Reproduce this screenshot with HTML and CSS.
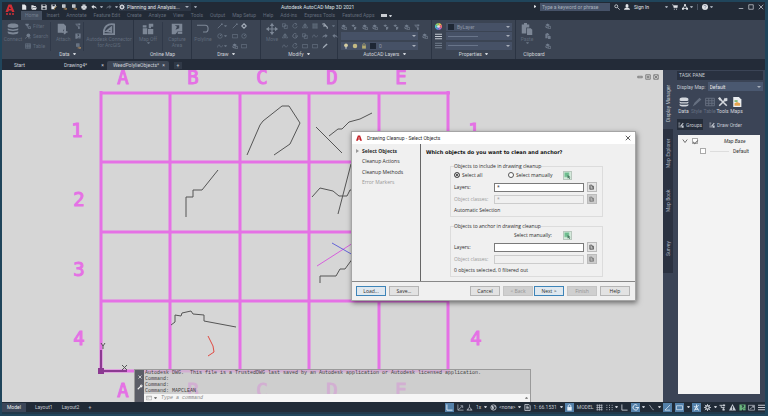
FILE: index.html
```html
<!DOCTYPE html>
<html lang="en">
<head>
<meta charset="utf-8">
<title>Autodesk AutoCAD Map 3D 2021</title>
<link rel="stylesheet" href="styles.css">
</head>
<body>
<svg class="sprite" aria-hidden="true">
  <symbol id="new" viewBox="0 0 16 16"><path d="M3 1h7l4 4v10H3z" fill="currentColor"/></symbol>
  <symbol id="open" viewBox="0 0 16 16"><path d="M1 14V3h5l2 2h5v3H5l-3 6zM5 9h11l-3 6H2z" fill="currentColor"/></symbol>
  <symbol id="save" viewBox="0 0 16 16"><path fill-rule="evenodd" d="M1 1h12l2 2v12H1zM4 2v4h8V2zM4 9v5h8V9z" fill="currentColor"/></symbol>
  <symbol id="saveas" viewBox="0 0 16 16"><path fill-rule="evenodd" d="M1 1h12v5L8 12v2H1zM4 2v4h6V2z" fill="currentColor"/><path d="M9 15l1-4 5-5" stroke="#d9b36a" stroke-width="2"/></symbol>
  <symbol id="doc" viewBox="0 0 16 16"><path d="M3 1h9v9H3z" fill="currentColor"/><path d="M6 4h4M6 7h4" stroke="#4a5568"/><path d="M7 13h8M12 10l3 3-3 3" stroke="#c89a62" stroke-width="2" fill="none"/></symbol>
  <symbol id="sheet" viewBox="0 0 16 16"><path d="M2 1h9l3 3v11H2zM5 5h5M5 8h6M5 11h6" fill="none" stroke="currentColor" stroke-width="2"/></symbol>
  <symbol id="print" viewBox="0 0 16 16"><path d="M4 1h8v4h3v7h-3v3H4v-3H1V5h3z" fill="currentColor"/><path d="M4 5h8M5 10h6" stroke="#4a5568"/></symbol>
  <symbol id="undo" viewBox="0 0 16 16"><path d="M7 2v3c5 0 8 3 8 8-2-3-4-4-8-4v4L1 7z" fill="currentColor"/></symbol>
  <symbol id="redo" viewBox="0 0 16 16"><path d="M9 2v3c-5 0-8 3-8 8 2-3 4-4 8-4v4l6-6z" fill="currentColor"/></symbol>
  <symbol id="gear" viewBox="0 0 16 16"><circle cx="8" cy="8" r="4" fill="none" stroke="currentColor" stroke-width="3"/><path d="M8 0v4M8 12v4M0 8h4M12 8h4M2 2l3 3M11 11l3 3M14 2l-3 3M2 14l3-3" stroke="currentColor" stroke-width="2"/></symbol>
  <symbol id="search" viewBox="0 0 16 16"><circle cx="6" cy="6" r="4" fill="none" stroke="currentColor" stroke-width="2"/><path d="M9 9l6 6" stroke="currentColor" stroke-width="2"/></symbol>
  <symbol id="user" viewBox="0 0 16 16"><ellipse cx="8" cy="5" rx="4" ry="5" fill="currentColor"/><path d="M0 15c0-4 4-5 8-5s8 1 8 5z" fill="currentColor"/></symbol>
  <symbol id="cart" viewBox="0 0 16 16"><path d="M0 2h3l2 8h9l1-6H4" fill="currentColor" stroke="currentColor"/><path d="M5 14h2M11 14h2" stroke="currentColor" stroke-width="3"/></symbol>
  <symbol id="apps" viewBox="0 0 16 16"><path d="M8 2L3 12h10z" fill="none" stroke="currentColor" stroke-width="2"/><path d="M6 0h4v5H6zM0 10h5v5H0zM11 10h5v5h-5z" fill="currentColor"/></symbol>
  <symbol id="help" viewBox="0 0 16 16"><circle cx="8" cy="8" r="8" fill="currentColor"/><path d="M5 6c0-4 6-3 6 0 0 2-3 2-3 4M8 12v2" stroke="#667085" stroke-width="2" fill="none"/></symbol>
  <symbol id="db" viewBox="0 0 16 16"><path d="M1 3c0-3 14-3 14 0v2c0 2-14 2-14 0zM1 7c2 2 12 2 14 0v2c0 2-14 2-14 0zM1 11c2 2 12 2 14 0v2c0 3-14 3-14 0z" fill="currentColor"/></symbol>
  <symbol id="filter" viewBox="0 0 16 16"><path d="M1 2h9v3L7 8v4H5V8L1 5z" fill="currentColor"/><path d="M9 10h6v5H9z" fill="none" stroke="currentColor" stroke-width="2"/></symbol>
  <symbol id="find" viewBox="0 0 16 16"><circle cx="9" cy="6" r="5" fill="currentColor"/><path d="M5 10l-4 5M8 13h7" stroke="currentColor" stroke-width="2"/></symbol>
  <symbol id="table" viewBox="0 0 16 16"><path d="M1 2h14v12H1zM1 6h14M1 10h14M6 2v12M11 2v12" fill="none" stroke="currentColor" stroke-width="1.5"/></symbol>
  <symbol id="attach" viewBox="0 0 16 16"><path d="M1 1h8l3 3v5H8v4H1z" fill="currentColor"/><path d="M10 15V9m-3 3h7m-3-5v7" stroke="currentColor" stroke-width="2"/></symbol>
  <symbol id="branch" viewBox="0 0 16 16"><path d="M1 3h9M5 3v5h8M10 8v6" stroke="currentColor" stroke-width="2" fill="none"/><path d="M9 1h5v4H9zM8 11h5v4H8z" fill="currentColor"/></symbol>
  <symbol id="arc" viewBox="0 0 16 16"><path d="M1 15C0 5 7 0 15 2v13zM5 11l6-5v6z" fill="none" stroke="currentColor" stroke-width="2.5"/></symbol>
  <symbol id="map" viewBox="0 0 16 16"><path fill-rule="evenodd" d="M1 1h14v10H9l-3 4H1zM5 3l3 2-2 4 5-2V3z" fill="currentColor"/><path d="M9 13h6" stroke="currentColor" stroke-width="3"/></symbol>
  <symbol id="mapoff" viewBox="0 0 16 16"><path d="M1 3h5v3H1zM1 7h6v8H1zM8 8h7v7H8zM9 1h6v4h-3v2H9z" fill="currentColor"/></symbol>
  <symbol id="polyline" viewBox="0 0 16 16"><path d="M0 3h11c5 0 5 9 0 9H8" fill="none" stroke="currentColor" stroke-width="1.5"/></symbol>
  <symbol id="line" viewBox="0 0 16 16"><path d="M2 14L13 3" stroke="currentColor" stroke-width="2"/><path d="M11 1h4v4h-4z" fill="currentColor"/></symbol>
  <symbol id="circle" viewBox="0 0 16 16"><circle cx="8" cy="8" r="6" fill="none" stroke="currentColor" stroke-width="1.5"/><path d="M8 8l4-4" stroke="currentColor" stroke-width="2"/></symbol>
  <symbol id="rect" viewBox="0 0 16 16"><path d="M1 4h14v9H1z" fill="none" stroke="currentColor" stroke-width="1.5"/></symbol>
  <symbol id="diamond" viewBox="0 0 16 16"><path d="M8 2l6 6-6 6-6-6z" fill="none" stroke="currentColor" stroke-width="3"/></symbol>
  <symbol id="wave" viewBox="0 0 16 16"><path d="M1 12c3-9 5-9 7-4s4 4 7-2" fill="none" stroke="currentColor" stroke-width="1.5"/></symbol>
  <symbol id="iso" viewBox="0 0 16 16"><path d="M3 2l8 11M11 13h2" fill="none" stroke="currentColor" stroke-width="1.5"/></symbol>
  <symbol id="move" viewBox="0 0 16 16"><path d="M8 1v14M1 8h14" stroke="currentColor" stroke-width="1.5"/><path d="M8 0l3 4H5zM8 16l3-4H5zM0 8l4-3v6zM16 8l-4-3v6z" fill="currentColor"/></symbol>
  <symbol id="copy" viewBox="0 0 16 16"><path d="M1 2h8v8H1zM6 6h8v9H6z" fill="none" stroke="currentColor" stroke-width="1.5"/></symbol>
  <symbol id="rotate" viewBox="0 0 16 16"><path d="M12 3a6 6 0 1 0 2 6M8 1l5 2-3 4" fill="none" stroke="currentColor" stroke-width="1.5"/></symbol>
  <symbol id="mirror" viewBox="0 0 16 16"><path d="M7 2v11H1zM9 2v11h6z" fill="none" stroke="currentColor" stroke-width="1.5"/></symbol>
  <symbol id="trim" viewBox="0 0 16 16"><path d="M1 3l5-1 4 5 4 4v4M3 8l8-1" fill="none" stroke="currentColor" stroke-width="3"/></symbol>
  <symbol id="layer" viewBox="0 0 16 16"><path d="M1 5l6-4 6 4-6 4zM1 8v3l6 4v-4z" fill="currentColor"/><path d="M9 9h6v6H9z" fill="none" stroke="currentColor" stroke-width="2"/></symbol>
  <symbol id="layer2" viewBox="0 0 16 16"><path d="M1 4l5-3 5 3-5 4zM8 8l6-1v4l-3 4H8z" fill="currentColor"/></symbol>
  <symbol id="bulb" viewBox="0 0 16 16"><circle cx="8" cy="6" r="5" fill="#d6cda1"/><path d="M6 10h4v5H6z" fill="#a9aeb5"/></symbol>
  <symbol id="sun" viewBox="0 0 16 16"><circle cx="8" cy="8" r="6" fill="#c3b983"/></symbol>
  <symbol id="lock" viewBox="0 0 16 16"><path d="M3 7h10v8H3z" fill="currentColor"/><path d="M5 8V4c0-3 6-3 6 0v4" fill="none" stroke="currentColor" stroke-width="2"/></symbol>
  <symbol id="wheel" viewBox="0 0 16 16"><path d="M8 8V0a8 8 0 0 1 7 4z" fill="#efbd4e"/><path d="M8 8l7-4a8 8 0 0 1 0 8z" fill="#e96b75"/><path d="M8 8l7 4a8 8 0 0 1-7 4z" fill="#ba68ce"/><path d="M8 8v8a8 8 0 0 1-7-4z" fill="#5a8fe0"/><path d="M8 8l-7 4a8 8 0 0 1 0-8z" fill="#51c6c1"/><path d="M8 8L1 4a8 8 0 0 1 7-4z" fill="#8fd16a"/><circle cx="8" cy="8" r="3" fill="#ecdfe2"/></symbol>
  <symbol id="lines" viewBox="0 0 16 16"><path d="M0 3h16M0 8h16M0 13h16" stroke="currentColor" stroke-width="2.5"/></symbol>
  <symbol id="paste" viewBox="0 0 16 16"><path d="M1 2h3V0h4v2h3v4H7v8H1z" fill="currentColor"/><path d="M8 7h5l2 2v7H8z" fill="currentColor"/></symbol>
  <symbol id="pencil" viewBox="0 0 16 16"><path d="M1 15l3-6L12 1l3 3-9 8z" fill="currentColor"/></symbol>
  <symbol id="tools" viewBox="0 0 16 16"><path d="M2 2l12 12M14 2L2 14" stroke="currentColor" stroke-width="2.5"/><path d="M0 2l3-2 3 4-3 2zM11 1l2 2 2-1v4l-3 1-3-3z" fill="currentColor"/></symbol>
  <symbol id="maps" viewBox="0 0 16 16"><path d="M2 0h9l4 4v12H2z" fill="#eceff2"/><path d="M4 10l4-2 5 2v4H4z" fill="#e5a34e"/><path d="M4 5h5v3H4z" fill="#7eb77a"/></symbol>
  <symbol id="groups" viewBox="0 0 16 16"><path d="M1 3h5M1 8h4M1 13h9" stroke="currentColor" stroke-width="2"/><path d="M6 10L13 2l2 2-7 8zM10 9h5v6h-5z" fill="currentColor"/></symbol>
  <symbol id="wrench" viewBox="0 0 16 16"><path d="M2 14l7-7" stroke="currentColor" stroke-width="3"/><path d="M8 4l4-4v4h4l-4 5-4-1z" fill="currentColor"/></symbol>
  <symbol id="prompt" viewBox="0 0 16 16"><path d="M1 3h14v10H1zM1 5h14M4 8l2 1-2 2" fill="none" stroke="#777"/></symbol>
  <symbol id="ortho" viewBox="0 0 16 16"><path d="M2 1v13h13" fill="none" stroke="currentColor" stroke-width="2"/></symbol>
  <symbol id="ucs" viewBox="0 0 16 16"><path d="M2 1v13h13M3 13l9-8M8 4h5v5" fill="none" stroke="currentColor" stroke-width="1.5"/></symbol>
  <symbol id="dots" viewBox="0 0 16 16"><path d="M1 3h2m4 0h2m4 0h2M1 8h2m4 0h2m4 0h2M1 13h2m4 0h2m4 0h2" stroke="currentColor" stroke-width="2"/></symbol>
  <symbol id="hash" viewBox="0 0 16 16"><path d="M1 3h14M1 8h14M1 13h14M3 1v14M8 1v14M13 1v14" stroke="currentColor" stroke-width="1.5"/></symbol>
  <symbol id="globe" viewBox="0 0 16 16"><circle cx="8" cy="8" r="6" fill="none" stroke="currentColor" stroke-width="2"/><path d="M3 4l5 1 1 5-3 3zM10 3l4 4-3 1z" fill="currentColor"/></symbol>
  <symbol id="warn" viewBox="0 0 16 16"><path fill-rule="evenodd" d="M8 0l8 15H0zM7 5h2v5H7zM7 11h2v2H7z" fill="currentColor"/></symbol>
  <symbol id="scale" viewBox="0 0 16 16"><path d="M8 1v6L2 14h12L8 7M5 14v-3M11 14v-3" fill="none" stroke="currentColor" stroke-width="1.5"/></symbol>
  <symbol id="person" viewBox="0 0 16 16"><path d="M8 1v6L3 15M8 7l5 8M2 6l6 1 5-4M4 12h8" fill="none" stroke="currentColor" stroke-width="2"/></symbol>
  <symbol id="tri" viewBox="0 0 16 16"><path d="M2 14h12M2 14L14 2" fill="none" stroke="currentColor" stroke-width="1.5"/></symbol>
  <symbol id="polar" viewBox="0 0 16 16"><path d="M12 3a6 6 0 1 0 2 6M8 8h8" fill="none" stroke="currentColor" stroke-width="2"/></symbol>
  <symbol id="pick" viewBox="0 0 16 16"><path d="M1 1h11v11H1z" fill="#7cc69a"/><path d="M3 4h7M3 7h5" stroke="#4ba374"/><path d="M8 6l7 6-3 0 2 3-2 1-2-3-2 2z" fill="#4d7a64"/></symbol>
  <symbol id="list" viewBox="0 0 16 16"><path d="M2 3h6v3h4v8H2zM5 5v9M8 8h3M8 11h3" fill="none" stroke="currentColor" stroke-width="1.5"/></symbol>
  <symbol id="full" viewBox="0 0 16 16"><path d="M1 3h14v11H1zM9 5h4v4M4 12l9-7" fill="none" stroke="currentColor" stroke-width="1.5"/></symbol>
</svg>

<div class="app">
  <header class="top">
    <svg class="logo" viewBox="0 0 20 24" aria-label="AutoCAD Map 3D"><path fill-rule="evenodd" d="M7 1h6l6 15h-5l-1-3H8l-2 3H1zM9 5l-1 5h4z" fill="#d12f36"/><path d="M2 20h16" stroke="#d12f36" stroke-width="3" stroke-dasharray="4 2"/></svg>
    <div class="top-rows">
      <div class="title-row">
        <div class="quick">
          <svg><use href="#new"/></svg><svg><use href="#open"/></svg><svg><use href="#save"/></svg><svg><use href="#saveas"/></svg><svg><use href="#doc"/></svg><svg><use href="#doc"/></svg><svg><use href="#print"/></svg><svg><use href="#undo"/></svg><i class="dn"></i><svg class="dim"><use href="#redo"/></svg><i class="dn"></i>
          <label class="workspace drop"><svg><use href="#gear"/></svg><select aria-label="Workspace"><option>Planning and Analysis...</option></select></label><i class="dn"></i>
        </div>
        <h1>Autodesk AutoCAD Map 3D 2021</h1>
        <div class="account">
          <i class="rt"></i><input class="search" type="text" aria-label="Search" placeholder="Type a keyword or phrase">
          <svg><use href="#search"/></svg><svg><use href="#user"/></svg><a href="#signin">Sign In</a><i class="dn push"></i><svg><use href="#cart"/></svg><svg><use href="#apps"/></svg><i class="dn"></i><i class="bar"></i><svg><use href="#help"/></svg><i class="dn"></i>
        </div>
        <div class="window"><button aria-label="Minimize"><svg viewBox="0 0 8 8"><path d="M1 6h6"/></svg></button><button aria-label="Maximize"><svg viewBox="0 0 8 8"><path d="M1 1h6v6H1z"/></svg></button><button aria-label="Close"><svg viewBox="0 0 8 8"><path d="M1 1l6 6M7 1L1 7"/></svg></button></div>
      </div>
      <nav class="menu"><a class="on" href="#home">Home</a><a href="#insert">Insert</a><a href="#annotate">Annotate</a><a href="#feature">Feature Edit</a><a href="#create">Create</a><a href="#analyze">Analyze</a><a href="#view">View</a><a href="#tools-tab">Tools</a><a href="#output">Output</a><a href="#setup">Map Setup</a><a href="#help-tab">Help</a><a href="#addins">Add-ins</a><a href="#express">Express Tools</a><a href="#featured">Featured Apps</a><i class="pill"></i><i class="dn"></i></nav>
    </div>
  </header>

  <div class="ribbon">
    <section class="panel data">
      <div class="tools">
        <button class="big"><svg><use href="#db"/></svg>Connect</button>
        <div class="stack"><button><svg><use href="#filter"/></svg>Filter</button><button><svg><use href="#find"/></svg>Search</button><button><svg><use href="#table"/></svg>Table</button></div>
        <i class="sep"></i>
        <button class="big"><svg><use href="#attach"/></svg>Attach</button>
        <div class="stack"><svg><use href="#branch"/></svg><svg><use href="#map"/></svg><svg><use href="#doc"/></svg></div>
        <i class="sep"></i>
        <button class="big wide"><svg><use href="#arc"/></svg>Autodesk Connector<br>for ArcGIS</button>
      </div>
      <h2>Data <i class="dn"></i></h2>
    </section>
    <section class="panel online">
      <div class="tools"><button class="big"><svg><use href="#mapoff"/></svg>Map Off<i class="dn"></i></button><i class="sep"></i><button class="big"><svg><use href="#map"/></svg>Capture<br>Area</button></div>
      <h2>Online Map</h2>
    </section>
    <section class="panel draw">
      <div class="tools"><button class="big"><svg><use href="#polyline"/></svg>Polyline</button>
        <div class="icons four"><svg><use href="#line"/></svg><i class="dn"></i><svg><use href="#line"/></svg><svg class="light"><use href="#diamond"/></svg><svg><use href="#circle"/></svg><i class="dn"></i><svg><use href="#rect"/></svg><svg><use href="#circle"/></svg><svg><use href="#wave"/></svg><i class="dn"></i><svg><use href="#layer"/></svg><svg><use href="#rect"/></svg></div></div>
      <h2>Draw <i class="dn"></i></h2>
    </section>
    <section class="panel modify">
      <div class="tools"><button class="big"><svg><use href="#move"/></svg>Move</button>
        <div class="icons five"><svg><use href="#copy"/></svg><svg><use href="#rotate"/></svg><svg><use href="#mirror"/></svg><svg><use href="#hash"/></svg><svg class="light"><use href="#trim"/></svg><i class="dn"></i><svg><use href="#mirror"/></svg><svg><use href="#polar"/></svg><svg><use href="#copy"/></svg><svg><use href="#wave"/></svg><svg><use href="#redo"/></svg><svg><use href="#undo"/></svg><svg><use href="#wave"/></svg><svg><use href="#rotate"/></svg><svg><use href="#rect"/></svg><svg><use href="#rect"/></svg><svg class="light"><use href="#pencil"/></svg></div></div>
      <h2>Modify <i class="dn"></i></h2>
    </section>
    <section class="panel layers">
      <div class="rows">
        <div class="row spread"><svg><use href="#layer"/></svg><svg><use href="#layer2"/></svg><svg><use href="#layer"/></svg><svg><use href="#layer"/></svg><svg><use href="#layer2"/></svg><svg><use href="#layer2"/></svg><svg><use href="#layer"/></svg><svg><use href="#branch"/></svg></div>
        <div class="row"><label class="field drop"><select aria-label="Layer state"><option></option></select></label><svg><use href="#layer"/></svg></div>
        <div class="row"><label class="field drop"><svg><use href="#bulb"/></svg><svg><use href="#sun"/></svg><svg class="unlock"><use href="#lock"/></svg><i class="swatch"></i><select aria-label="Current layer"><option>0</option></select></label><i class="blank"></i></div>
      </div>
      <h2>AutoCAD Layers <i class="dn"></i></h2>
    </section>
    <section class="panel props">
      <div class="rows">
        <div class="row"><svg><use href="#wheel"/></svg><label class="field drop"><i class="swatch"></i><select aria-label="Colour"><option>ByLayer</option></select></label></div>
        <div class="row"><svg class="light"><use href="#lines"/></svg><label class="field drop"><i class="rule"></i><select aria-label="Lineweight"><option></option></select></label></div>
        <div class="row"><svg><use href="#lines"/></svg><label class="field drop"><i class="rule"></i><select aria-label="Linetype"><option></option></select></label></div>
      </div>
      <h2>Properties <i class="dn"></i></h2>
    </section>
    <section class="panel clip">
      <div class="tools"><button class="big"><svg><use href="#paste"/></svg>Paste<i class="dn"></i></button><div class="stack"><svg><use href="#layer"/></svg><svg><use href="#paste"/></svg><svg><use href="#layer"/></svg></div></div>
      <h2>Clipboard</h2>
    </section>
  </div>

  <nav class="files"><a href="#start">Start</a><a href="#d4">Drawing4* <b>×</b></a><a class="on" href="#weed">WeedPolylieObjects* <b>×</b></a><button aria-label="New drawing">+</button></nav>

  <main class="work">
    <div class="canvas">
      <svg class="drawing" role="img" aria-label="Map grid">
        <g transform="translate(-2 -70)">
          <g class="grid"><path d="M101 91v281M170 93v278M240 93v278M309 93v278M379 93v278M448 91v281M100 93h350M101 162h347M101 232h347M101 301h347M101 371h349"/></g>
          <g class="marks"><text x="123" y="84">A</text><text x="193" y="84">B</text><text x="262" y="84">C</text><text x="332" y="84">D</text><text x="401" y="84">E</text><text x="123" y="397">A</text><text x="193" y="397">B</text><text x="262" y="397">C</text><text x="332" y="397">D</text><text x="401" y="397">E</text><text x="77" y="137">1</text><text x="79" y="206">2</text><text x="79" y="276">3</text><text x="79" y="345">4</text><text x="474" y="137">1</text><text x="476" y="345">4</text></g>
          <g class="ink"><path d="M247 155l13-30 3-4 19-15h7l11 17-10 21-16 11M316 127l26 26M329 136l9-7h4l7-7 11-3 12-6M312 197l8-9 13 3 6 5h8l3-6h4M338 214l13-50M320 283v-7h16l4-7h5l8-11M186 217v-20h7v-7h9l16-20M171 325l4-3v-7l6 1 1-3 9-2 2 3 11 1v6l32 6"/><path class="magenta" d="M317 266l36-23"/><path class="blue" d="M332 243l21 12"/><path class="red" d="M208 336l5 10 1 6-6 4"/><path class="axis" d="M101 350v21h26M99 369h4v4h-4z"/><path d="M101 343l2 3 2-3M103 346v3M122 365l5 5M127 365l-5 5"/></g>
        </g>
      </svg>
      <div class="mdi"><svg viewBox="0 0 8 8"><path d="M1 3h6v2H1z"/></svg><svg viewBox="0 0 8 8"><path d="M1 1h6v6H1zM3 3h2v2H3z"/></svg><svg viewBox="0 0 8 8"><path d="M1 1h6v6H1zM2 2l4 4M6 2L2 6"/></svg></div>

      <section class="command">
        <div class="grip"><svg viewBox="0 0 8 8"><path d="M2 2l4 4M6 2L2 6" stroke="currentColor"/></svg><svg><use href="#wrench"/></svg></div>
        <div class="console"><pre>Autodesk DWG.  This file is a TrustedDWG last saved by an Autodesk application or Autodesk licensed application.
Command:
Command:
Command: MAPCLEAN</pre><div class="entry"><svg><use href="#prompt"/></svg><i class="dn"></i><input type="text" aria-label="Command" placeholder="Type a command"><i class="up"></i></div></div>
      </section>

      <form class="dialog" role="dialog" aria-label="Drawing Cleanup">
        <div class="dialog-title"><svg viewBox="0 0 16 16"><path fill-rule="evenodd" d="M5 1h6l5 14h-5l-1-3H6l-1 3H0zM8 5L6 9h4z" fill="#c4242b"/></svg><span>Drawing Cleanup - Select Objects</span><button type="button" aria-label="Close"><svg viewBox="0 0 8 8"><path d="M1 1l6 6M7 1L1 7"/></svg></button></div>
        <div class="dialog-body">
          <ol class="steps"><li class="on">Select Objects</li><li>Cleanup Actions</li><li>Cleanup Methods</li><li class="off">Error Markers</li></ol>
          <div class="page">
            <h2>Which objects do you want to clean and anchor?</h2>
            <fieldset><legend>Objects to include in drawing cleanup</legend>
              <div class="choose"><label><input type="radio" name="inc" checked>Select all</label><label><input type="radio" name="inc">Select manually</label><button type="button" aria-label="Pick objects"><svg><use href="#pick"/></svg></button></div>
              <div class="line"><label for="l1">Layers:</label><input id="l1" type="text" value="*"><button type="button" aria-label="Select layers"><svg><use href="#list"/></svg></button></div>
              <div class="line off"><label for="c1">Object classes:</label><input id="c1" type="text" value="*" disabled><button type="button" disabled aria-label="Select classes"><svg><use href="#list"/></svg></button></div>
              <p>Automatic Selection</p>
            </fieldset>
            <fieldset><legend>Objects to anchor in drawing cleanup</legend>
              <div class="choose"><span></span><span class="manual">Select manually:</span><button type="button" aria-label="Pick anchors"><svg><use href="#pick"/></svg></button></div>
              <div class="line"><label for="l2">Layers:</label><input id="l2" type="text"><button type="button" aria-label="Select anchor layers"><svg><use href="#list"/></svg></button></div>
              <div class="line off"><label for="c2">Object classes:</label><input id="c2" type="text" disabled><button type="button" disabled aria-label="Select anchor classes"><svg><use href="#list"/></svg></button></div>
              <p>0 objects selected, 0 filtered out</p>
            </fieldset>
          </div>
        </div>
        <div class="dialog-foot"><button type="button" class="focus">Load...</button><button type="button">Save...</button><button type="button" class="far">Cancel</button><span class="pair"><button type="button" disabled>&lt; Back</button><button type="button" class="focus">Next &gt;</button></span><button type="button" disabled>Finish</button><button type="button">Help</button></div>
      </form>
    </div>

    <aside class="task">
      <nav class="side"><a class="on" href="#dm">Display Manager</a><a href="#me">Map Explorer</a><a href="#mb">Map Book</a><a href="#sv">Survey</a></nav>
      <div class="pane">
        <h2>TASK PANE</h2>
        <label class="display">Display Map:<span class="drop"><select><option>Default</option></select></span></label>
        <div class="pane-tools"><button><svg><use href="#db"/></svg>Data</button><button class="faint"><svg><use href="#pencil"/></svg>Style</button><button class="faint"><svg><use href="#table"/></svg>Table</button><button><svg><use href="#tools"/></svg>Tools</button><button><svg><use href="#maps"/></svg>Maps</button></div>
        <div class="order"><button class="on"><svg><use href="#groups"/></svg>Groups</button><button><svg><use href="#groups"/></svg>Draw Order</button></div>
        <div class="tree"><label><svg viewBox="0 0 8 8"><path d="M1 2l3 4 3-4"/></svg><input type="checkbox" checked><em>Map Base</em></label><label class="child"><input type="checkbox"><i></i><span>Default</span></label></div>
      </div>
    </aside>
  </main>

  <footer class="status">
    <nav><a class="on" href="#model">Model</a><a href="#l1t">Layout1</a><a href="#l2t">Layout2</a><a href="#add">+</a></nav>
    <div class="toggles"><svg class="hot"><use href="#ortho"/></svg><svg><use href="#ucs"/></svg><svg><use href="#scale"/></svg><span>1x</span><i class="dn"></i><svg><use href="#globe"/></svg><span>&lt;none&gt;</span><i class="dn"></i><svg><use href="#sheet"/></svg><span>1: 66.1531</span><i class="dn"></i><svg class="hot"><use href="#lock"/></svg><span>MODEL</span><svg><use href="#hash"/></svg><svg><use href="#dots"/></svg><i class="dn"></i><svg><use href="#ortho"/></svg><svg class="hot"><use href="#polar"/></svg><i class="dn"></i><svg><use href="#iso"/></svg><i class="dn"></i><svg class="hot"><use href="#tri"/></svg><svg class="hot"><use href="#rect"/></svg><i class="dn"></i><svg class="hot"><use href="#person"/></svg><svg><use href="#gear"/></svg><i class="dn"></i><svg><use href="#branch"/></svg><svg><use href="#warn"/></svg><svg class="green"><use href="#map"/></svg><svg><use href="#full"/></svg><svg><use href="#lines"/></svg></div>
  </footer>
</div>
</body>
</html>
```
FILE: styles.css
```css
* { box-sizing: border-box; }
body { margin: 0; background: #222a36; font: 5px/6px Roboto, "Noto Sans", sans-serif; color: #c5cad2; }
h1, h2, p, ol, pre, fieldset { margin: 0; padding: 0; font: inherit; }
a { color: inherit; text-decoration: none; white-space: nowrap; }
button, input, select { font: inherit; color: inherit; margin: 0; padding: 0; border: 0; background: none; border-radius: 0; outline: none; min-width: 0; }
select { appearance: none; flex: 1; line-height: 6px; }
svg { display: block; width: 6px; height: 6px; flex: none; }
.sprite { position: absolute; width: 0; height: 0; }
.app { height: 100vh; display: flex; flex-direction: column; border: 2px solid #20455b; border-right-width: 3px; border-bottom-width: 2px; }

.dn, .rt, .up { flex: none; display: inline-block; border: 1px solid transparent; border-top: 2px solid currentColor; border-bottom: 0; width: 3px; height: 2px; }
.rt { border: 1px solid transparent; border-left: 2px solid currentColor; border-right: 0; width: 2px; height: 3px; }
.up { border: 1px solid transparent; border-bottom: 2px solid #888; border-top: 0; }
.drop { display: flex; align-items: center; }
.drop::after { content: ""; flex: none; border: 2px solid transparent; border-top-color: #a9b0bb; border-bottom: 0; margin-right: 2px; }

.top { display: flex; height: 18px; flex: none; }
.logo { width: 10px; height: 14px; margin: 1px 6px 0 3px; }
.top-rows { flex: 1; }
.title-row { height: 9px; display: flex; align-items: center; }
.quick { display: flex; align-items: center; gap: 4px; width: 260px; color: #e2e5e9; }
.quick .dn { color: #9aa2ae; margin: 0 -1px; }
.quick .dim { color: #596473; }
.workspace { background: #2d3644; gap: 2px; width: 72px; height: 8px; margin-left: -2px; color: #e2e5e9; }
.title-row h1 { flex: 1; color: #dde0e5; }
.account { display: flex; align-items: center; gap: 4px; width: 179px; margin-right: 25px; color: #e2e5e9; }
.search { width: 70px; height: 8px; flex: none; background: #465268; padding-left: 2px; }
.search::placeholder { color: #aab2bf; opacity: 1; }
.account .dn { color: #9aa2ae; margin-left: -2px; }
.account .push { margin-left: 12px; }
.bar { width: 1px; height: 6px; background: #4a5362; }
.window { display: flex; gap: 4px; margin-right: 1px; }
.window svg, .mdi svg, .dialog-title button svg { fill: none; stroke: currentColor; }
.menu { height: 9px; display: flex; align-items: center; gap: 7px; color: #626c7b; line-height: 9px; }
.menu .on { background: #465162; padding: 0 4px; margin-right: -3px; color: #727d8d; }
.pill { width: 6px; height: 3px; background: #c8ccd2; margin-right: -5px; }
.menu .pill + .dn { color: #c8ccd2; }

.ribbon { height: 39px; flex: none; display: flex; background: #3b4453; color: #606b7b; }
.panel { display: flex; flex-direction: column; border-right: 1px solid #2b3443; padding: 1px 1px 0; }
.panel h2 { height: 8px; line-height: 7px; text-align: center; color: #d0d4da; }
.panel h2 .dn { vertical-align: 1px; margin-left: 2px; }
.data { width: 132px; } .online { width: 58px; } .draw { width: 69px; } .modify { width: 77px; }
.layers { width: 94px; } .props { width: 84px; } .clip { width: 36px; border: 0; }
.tools { height: 30px; display: flex; justify-content: space-between; }
.big { display: flex; flex-direction: column; align-items: center; min-width: 20px; padding-top: 2px; line-height: 6px; }
.big svg { width: 12px; height: 12px; margin-bottom: 1px; color: #7d8796; }
.wide { min-width: 46px; }
.online .big { min-width: 26px; }
.stack { display: flex; flex-direction: column; justify-content: space-between; padding: 2px 0; }
.stack button { display: flex; gap: 2px; }
.stack svg, .icons svg, .rows svg { color: #717c8c; }
.sep { width: 1px; background: #303949; margin-top: 1px; }
.icons { display: grid; align-content: space-between; align-items: center; padding: 2px 0; }
.icons .light { color: #a4adb9; }
.four { grid-template-columns: 7px 8px 9px 18px; }
.five { grid-template-columns: repeat(5, 10px) 6px; }
.rows { height: 30px; display: flex; flex-direction: column; justify-content: space-between; padding: 1px 2px; }
.row { display: flex; align-items: center; gap: 4px; height: 9px; }
.spread { justify-content: space-between; padding-right: 8px; }
.field { flex: 1; height: 8px; background: #465166; gap: 3px; padding-left: 2px; }
.field select { color: #8e98a6; }
.props .row svg { width: 7px; height: 7px; }
.rows .light { color: #c5cad2; }
.rows .unlock { color: #b3aa70; }
.swatch { width: 6px; height: 6px; background: #1e2734; }
.blank { width: 6px; }
.rule { width: 30px; height: 1px; background: #69758a; }

.files { height: 11px; flex: none; display: flex; align-items: center; padding: 1px 0 0 9px; background: #232b38; color: #ccd1d8; }
.files a { display: flex; justify-content: space-between; width: 44px; height: 9px; line-height: 9px; padding: 0 3px; }
.files a:nth-child(2) { width: 52px; padding-left: 9px; }
.files .on { width: 62px; padding: 0 4px 0 6px; background: #3c4554; border-radius: 2px 2px 0 0; }
.files b { font-weight: 400; }
.files button { margin-left: 5px; width: 8px; height: 7px; line-height: 6px; background: #303947; }

.work { flex: 1; min-height: 0; display: flex; }
.canvas { position: relative; flex: 1; background: #d6d6d6; overflow: hidden; }
.drawing { width: 100%; height: 100%; }
.grid path { stroke: #e571e5; stroke-width: 3; fill: none; }
.marks { fill: #e571e5; stroke: #e571e5; stroke-width: 1; font: 19px "DejaVu Sans Mono", monospace; text-anchor: middle; }
.ink path { stroke: #555; fill: none; }
.ink .magenta { stroke: #d65fdc; }
.ink .blue { stroke: #6464d8; }
.ink .red { stroke: #e04a42; }
.ink .axis { stroke: #8c3a92; stroke-width: 2; }
.mdi { position: absolute; top: 4px; right: 4px; display: flex; gap: 2px; color: #666; }

.command { position: absolute; left: 132px; right: 132px; bottom: 0; height: 33px; display: flex; border: 1px solid #9a9a9a; border-bottom: 0; }
.grip { width: 9px; background: #5b5d67; color: #eee; display: flex; flex-direction: column; align-items: center; gap: 4px; padding-top: 4px; }
.console { flex: 1; min-width: 0; display: flex; flex-direction: column; background: rgb(202 202 202 / .7); }
.console pre { flex: 1; font: 5px/6px "Liberation Mono", monospace; color: #444; padding-left: 1px; }
.entry { height: 8px; display: flex; align-items: center; gap: 2px; background: #f5f5f5; color: #777; padding: 0 2px; font: italic 5px/6px "Liberation Mono", monospace; }
.entry input { flex: 1; padding-left: 2px; }
.entry input::placeholder { color: #888; opacity: 1; }

.dialog { position: absolute; left: 349px; top: 61px; width: 285px; background: #f0f0f0; border: 1px solid #a5a5a5; box-shadow: 1px 2px 5px rgb(0 0 0 / .5); color: #2b2b2b; font-family: "Open Sans", "Noto Sans", sans-serif; }
.dialog-title { height: 12px; background: #fff; display: flex; align-items: center; gap: 5px; padding: 0 4px; font-family: Roboto, sans-serif; }
.dialog-title span { flex: 1; }
.dialog-body { display: flex; height: 138px; border-bottom: 1px solid #888; }
.steps { width: 69px; list-style: none; padding: 4px 0 0 10px; border-right: 1px solid #666; }
.steps li { height: 10px; margin-bottom: 1px; }
.steps li:nth-child(odd) { margin-bottom: 0; }
.steps .on { font-weight: 700; }
.steps .on::before { content: ""; float: left; margin: 1px 0 0 -6px; border: 2px solid transparent; border-left: 3px solid #999; border-right: 0; }
.off { color: #999; }
.page { flex: 1; padding: 5px 32px 0 5px; }
.page h2 { font: bold 5px/7px "DejaVu Sans", sans-serif; color: #111; margin-bottom: 7px; white-space: nowrap; }
fieldset { border: 1px solid #dcdcdc; margin: 0 0 6px 24px; padding: 0 3px; height: 54px; }
legend { padding: 0; line-height: 6px; }
.choose { display: grid; grid-template-columns: 54px 1fr 36px; align-items: center; height: 10px; margin-top: 1px; }
.choose label { display: flex; align-items: center; gap: 2px; }
.choose input { appearance: none; width: 6px; height: 6px; border: 1px solid #555; border-radius: 50%; background: #fff; }
.choose input:checked { background: #222; box-shadow: inset 0 0 0 1px #fff; }
.choose button { width: 9px; height: 9px; background: #d5eadc; border: 1px solid #b9c8be; }
.choose button svg { width: 7px; height: 7px; }
.manual { padding-left: 6px; }
.line { display: flex; align-items: center; height: 10px; margin-top: 2px; }
.line label { width: 40px; }
.line input { flex: 1; height: 9px; border: 1px solid #7a7a7a; background: #fff; padding-left: 2px; }
.line input:disabled { background: #f0f0f0; border-color: #ccc; }
.line button { width: 10px; height: 10px; border: 1px solid #bbb; background: #e4e4e4; margin: 0 2px 0 3px; display: grid; place-items: center; color: #222; }
.line button:disabled { background: #ccc; color: #555; }
fieldset p { margin-top: 3px; }
.dialog-foot { height: 18px; display: flex; align-items: center; gap: 3px; padding: 0 5px 0 4px; }
.dialog-foot button { width: 30px; height: 10px; background: #e2e2e2; border: 1px solid #b5b5b5; line-height: 6px; }
.dialog-foot button:disabled { background: #cfcfcf; border-color: #c4c4c4; color: #939393; }
.dialog-foot .focus { border-color: #3d84b8; background: #dfe8ef; }
.dialog-foot .far { margin-left: auto; }
.pair { display: flex; gap: 1px; }

.task { width: 102px; flex: none; display: flex; background: #3b4456; }
.side { width: 10px; padding-top: 7px; display: flex; flex-direction: column; }
.side a { writing-mode: vertical-rl; transform: rotate(180deg); width: 10px; height: 48px; line-height: 10px; text-align: center; background: #2b3241; color: #aeb5c1; }
.side .on { background: #3b4456; height: 52px; color: #c5cad2; }
.pane { flex: 1; min-width: 0; display: flex; flex-direction: column; padding: 1px 2px 8px 4px; }
.pane h2 { background: #293140; height: 9px; line-height: 9px; padding-left: 2px; margin-bottom: 2px; }
.display { display: flex; align-items: center; white-space: nowrap; }
.display .drop { flex: 1; height: 9px; background: #4a5870; margin-left: 2px; padding-left: 2px; color: #e2e5e9; }
.pane-tools { display: flex; margin-top: 6px; }
.pane-tools button { width: 13px; display: flex; flex-direction: column; align-items: center; gap: 1px; color: #d4d8de; }
.pane-tools button:last-child { margin-left: 1px; }
.pane-tools svg { width: 10px; height: 10px; }
.pane-tools .faint { color: #667081; }
.order { display: flex; gap: 5px; margin-top: 5px; }
.order button { display: flex; align-items: center; gap: 2px; height: 11px; padding: 0 1px; }
.order .on { background: #252d3a; }
.tree { flex: 1; margin: 5px 3px 0 1px; background: #f3f3f3; color: #333; padding-top: 1px; }
.tree label { display: flex; align-items: center; height: 10px; gap: 4px; padding-left: 4px; }
.tree label > svg { fill: none; stroke: #444; }
.tree input { appearance: none; width: 6px; height: 6px; border: 1px solid #aaa; background: #fff; }
.tree input:checked { display: grid; place-items: center; }
.tree input:checked::after { content: ""; width: 4px; height: 2px; border: 1px solid #777; border-top: 0; border-right: 0; transform: rotate(-45deg); }
.tree em { margin-left: 22px; }
.tree .child { padding-left: 22px; }
.tree i { width: 19px; height: 1px; background: #ddd; }

.status { height: 12px; flex: none; display: flex; align-items: center; justify-content: space-between; background: #212b37; border-bottom: 2px solid #20394b; }
.status nav { display: flex; align-items: center; gap: 9px; }
.status nav .on { background: #3b4658; padding: 1px 5px 2px; color: #eee; }
.toggles { display: flex; align-items: center; width: 320px; justify-content: space-between; color: #c5cad2; }
.toggles svg { width: 7px; height: 7px; }
.toggles .hot { background: #5481aa; color: #eaf2fa; width: 9px; height: 9px; padding: 1px; }
.toggles .green { color: #68b47c; }
```
